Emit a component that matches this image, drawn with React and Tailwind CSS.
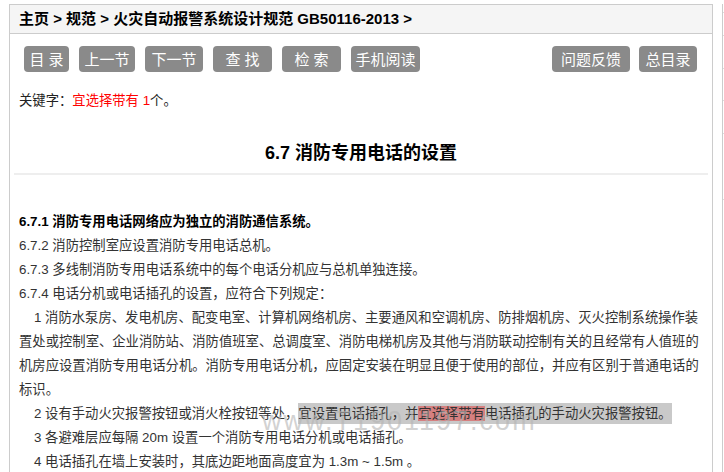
const buttons = [
  { label: "目 录", w: "w-[45px]" },
  { label: "上一节", w: "w-[56px]" },
  { label: "下一节", w: "w-[58px]" },
  { label: "查 找", w: "w-[59px]" },
  { label: "检 索", w: "w-[59px]" },
  { label: "手机阅读", w: "w-[69px]" },
];

function Btn({ label, w }) {
  return (
    <span className={`${w} h-[26px] flex items-center justify-center rounded-[4px] bg-[#8a8a8a] text-white text-[15px] leading-none`}>
      {label}
    </span>
  );
}

export default function App() {
  return (
    <div
      className="h-[472px] w-[724px] overflow-hidden bg-white flex pt-[4px]"
      style={{ fontFamily: '"Liberation Sans", "Noto Sans CJK SC", sans-serif' }}
    >
      <div className="ml-[9px] w-[704px] shrink-0 border border-[#cccccc] border-b-0">
        {/* 面包屑 */}
        <div className="h-[29px] bg-[#f5f5f5] border-b border-[#cccccc] pl-[9px] flex items-center text-[15px] font-bold text-black">
          主页 &gt; 规范 &gt; 火灾自动报警系统设计规范 GB50116-2013 &gt;
        </div>

        {/* 按钮 */}
        <div className="flex items-center pl-[14px] pr-[15px] mt-[12px]">
          <div className="flex gap-[10px]">
            {buttons.map((b) => (
              <Btn key={b.label} {...b} />
            ))}
          </div>
          <div className="ml-auto flex gap-[9px]">
            <Btn label="问题反馈" w="w-[78px]" />
            <Btn label="总目录" w="w-[58px]" />
          </div>
        </div>

        <div className="pl-[9px] mt-[21px] text-[13.33px] leading-[16px] text-[#222]">
          关键字：<span className="text-[#ff0000]">宜选择带有 1</span>个。
        </div>

        <div className="mt-[32px] mx-[4px] pb-[8px] border-b-2 border-[#eeeeee] text-center text-[18px] font-bold text-black leading-[24px]">
          6.7 消防专用电话的设置
        </div>

        <div className="mt-[35px] pl-[9px] text-[13.33px] leading-[24px] text-[#333] whitespace-nowrap">
          <div className="font-bold text-black">6.7.1 消防专用电话网络应为独立的消防通信系统。</div>
          <div>6.7.2 消防控制室应设置消防专用电话总机。</div>
          <div>6.7.3 多线制消防专用电话系统中的每个电话分机应与总机单独连接。</div>
          <div>6.7.4 电话分机或电话插孔的设置，应符合下列规定：</div>
          <div className="pl-[15px]">1 消防水泵房、发电机房、配变电室、计算机网络机房、主要通风和空调机房、防排烟机房、灭火控制系统操作装</div>
          <div>置处或控制室、企业消防站、消防值班室、总调度室、消防电梯机房及其他与消防联动控制有关的且经常有人值班的</div>
          <div>机房应设置消防专用电话分机。消防专用电话分机，应固定安装在明显且便于使用的部位，并应有区别于普通电话的</div>
          <div>标识。</div>
          <div className="pl-[15px] relative">
            2 设有手动火灾报警按钮或消火栓按钮等处，
            <span className="bg-[#c9c9c9] py-[3px]">
              宜设置电话插孔，并<span className="bg-[#d58080]">宜选择带有</span>电话插孔的手动火灾报警按钮。
            </span>
            <span className="absolute left-[243px] top-[4px] text-[27px] leading-[30px] text-[#b4b4b4]/60 tracking-[2px] pointer-events-none">
              www.T1901197.com
            </span>
          </div>
          <div className="pl-[15px]">3 各避难层应每隔 20m 设置一个消防专用电话分机或电话插孔。</div>
          <div className="pl-[15px]">4 电话插孔在墙上安装时，其底边距地面高度宜为 1.3m ~ 1.5m 。</div>
        </div>
      </div>

      {/* 右侧栏 */}
      <div className="ml-[9px] w-[20px] shrink-0 border-l border-[#cccccc] flex flex-col">
        <div className="mt-[8px] h-[23px] border-t border-[#dddddd]" />
        <div className="h-[33px] border-t border-[#dddddd]" />
        <div className="h-[32px] border-t border-[#dddddd]" />
        <div className="h-[33px] border-t border-[#dddddd]" />
        <div className="h-[66px] border-t border-[#dddddd]" />
        <div className="border-t border-[#dddddd]" />
      </div>
    </div>
  );
}
